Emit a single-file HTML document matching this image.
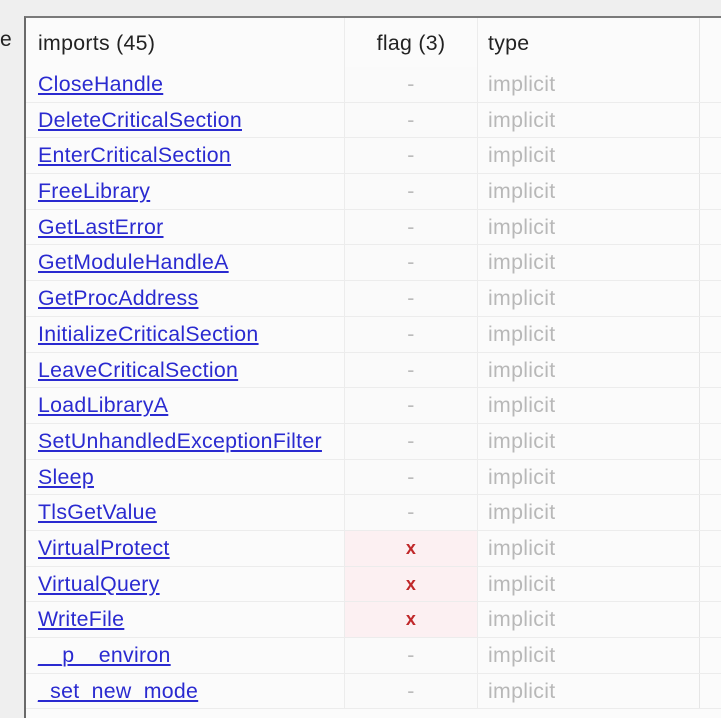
<!DOCTYPE html>
<html><head><style>
body{margin:0;width:721px;height:706px;overflow:hidden;background:#efefef;font-family:"Liberation Sans",sans-serif;position:relative}
.e{position:absolute;left:0;top:28px;font-size:21px;color:#222}
.panel{position:absolute;left:24px;top:16px;width:720px;height:700px;background:#fbfbfb;border-left:2px solid #6a6a6a;border-top:2px solid #7a7a7a}
.row{display:flex;height:35.7px;border-bottom:1px solid #ececec;box-sizing:border-box;font-size:21.3px;line-height:34px;letter-spacing:0.3px}
.hdr{height:49px;line-height:50px;color:#222;border-bottom:none}
.c1{width:319px;padding-left:12px;box-sizing:border-box;border-right:1px solid #ececec;white-space:nowrap}
.c2{width:132px;text-align:center;border-right:1px solid #ececec;color:#bbb;background:#fafafa}
.c3{width:222px;padding-left:10px;box-sizing:border-box;color:#b8b8b8;border-right:1px solid #e6e6e6}
.hdr .c2,.hdr .c3{color:#222;background:transparent}
a{color:#2a2ad0;text-decoration:underline}
.x .c2{background:#fcf0f2;color:#c0282a;font-weight:bold;font-size:18px}
</style></head><body>
<div class="e">e</div>
<div class="panel">
<div class="row hdr"><div class="c1">imports (45)</div><div class="c2">flag (3)</div><div class="c3">type</div></div>
<div class="row"><div class="c1"><a>CloseHandle</a></div><div class="c2">-</div><div class="c3">implicit</div></div>
<div class="row"><div class="c1"><a>DeleteCriticalSection</a></div><div class="c2">-</div><div class="c3">implicit</div></div>
<div class="row"><div class="c1"><a>EnterCriticalSection</a></div><div class="c2">-</div><div class="c3">implicit</div></div>
<div class="row"><div class="c1"><a>FreeLibrary</a></div><div class="c2">-</div><div class="c3">implicit</div></div>
<div class="row"><div class="c1"><a>GetLastError</a></div><div class="c2">-</div><div class="c3">implicit</div></div>
<div class="row"><div class="c1"><a>GetModuleHandleA</a></div><div class="c2">-</div><div class="c3">implicit</div></div>
<div class="row"><div class="c1"><a>GetProcAddress</a></div><div class="c2">-</div><div class="c3">implicit</div></div>
<div class="row"><div class="c1"><a>InitializeCriticalSection</a></div><div class="c2">-</div><div class="c3">implicit</div></div>
<div class="row"><div class="c1"><a>LeaveCriticalSection</a></div><div class="c2">-</div><div class="c3">implicit</div></div>
<div class="row"><div class="c1"><a>LoadLibraryA</a></div><div class="c2">-</div><div class="c3">implicit</div></div>
<div class="row"><div class="c1"><a>SetUnhandledExceptionFilter</a></div><div class="c2">-</div><div class="c3">implicit</div></div>
<div class="row"><div class="c1"><a>Sleep</a></div><div class="c2">-</div><div class="c3">implicit</div></div>
<div class="row"><div class="c1"><a>TlsGetValue</a></div><div class="c2">-</div><div class="c3">implicit</div></div>
<div class="row x"><div class="c1"><a>VirtualProtect</a></div><div class="c2">x</div><div class="c3">implicit</div></div>
<div class="row x"><div class="c1"><a>VirtualQuery</a></div><div class="c2">x</div><div class="c3">implicit</div></div>
<div class="row x"><div class="c1"><a>WriteFile</a></div><div class="c2">x</div><div class="c3">implicit</div></div>
<div class="row"><div class="c1"><a>__p__environ</a></div><div class="c2">-</div><div class="c3">implicit</div></div>
<div class="row"><div class="c1"><a>_set_new_mode</a></div><div class="c2">-</div><div class="c3">implicit</div></div>
</div>
</body></html>
